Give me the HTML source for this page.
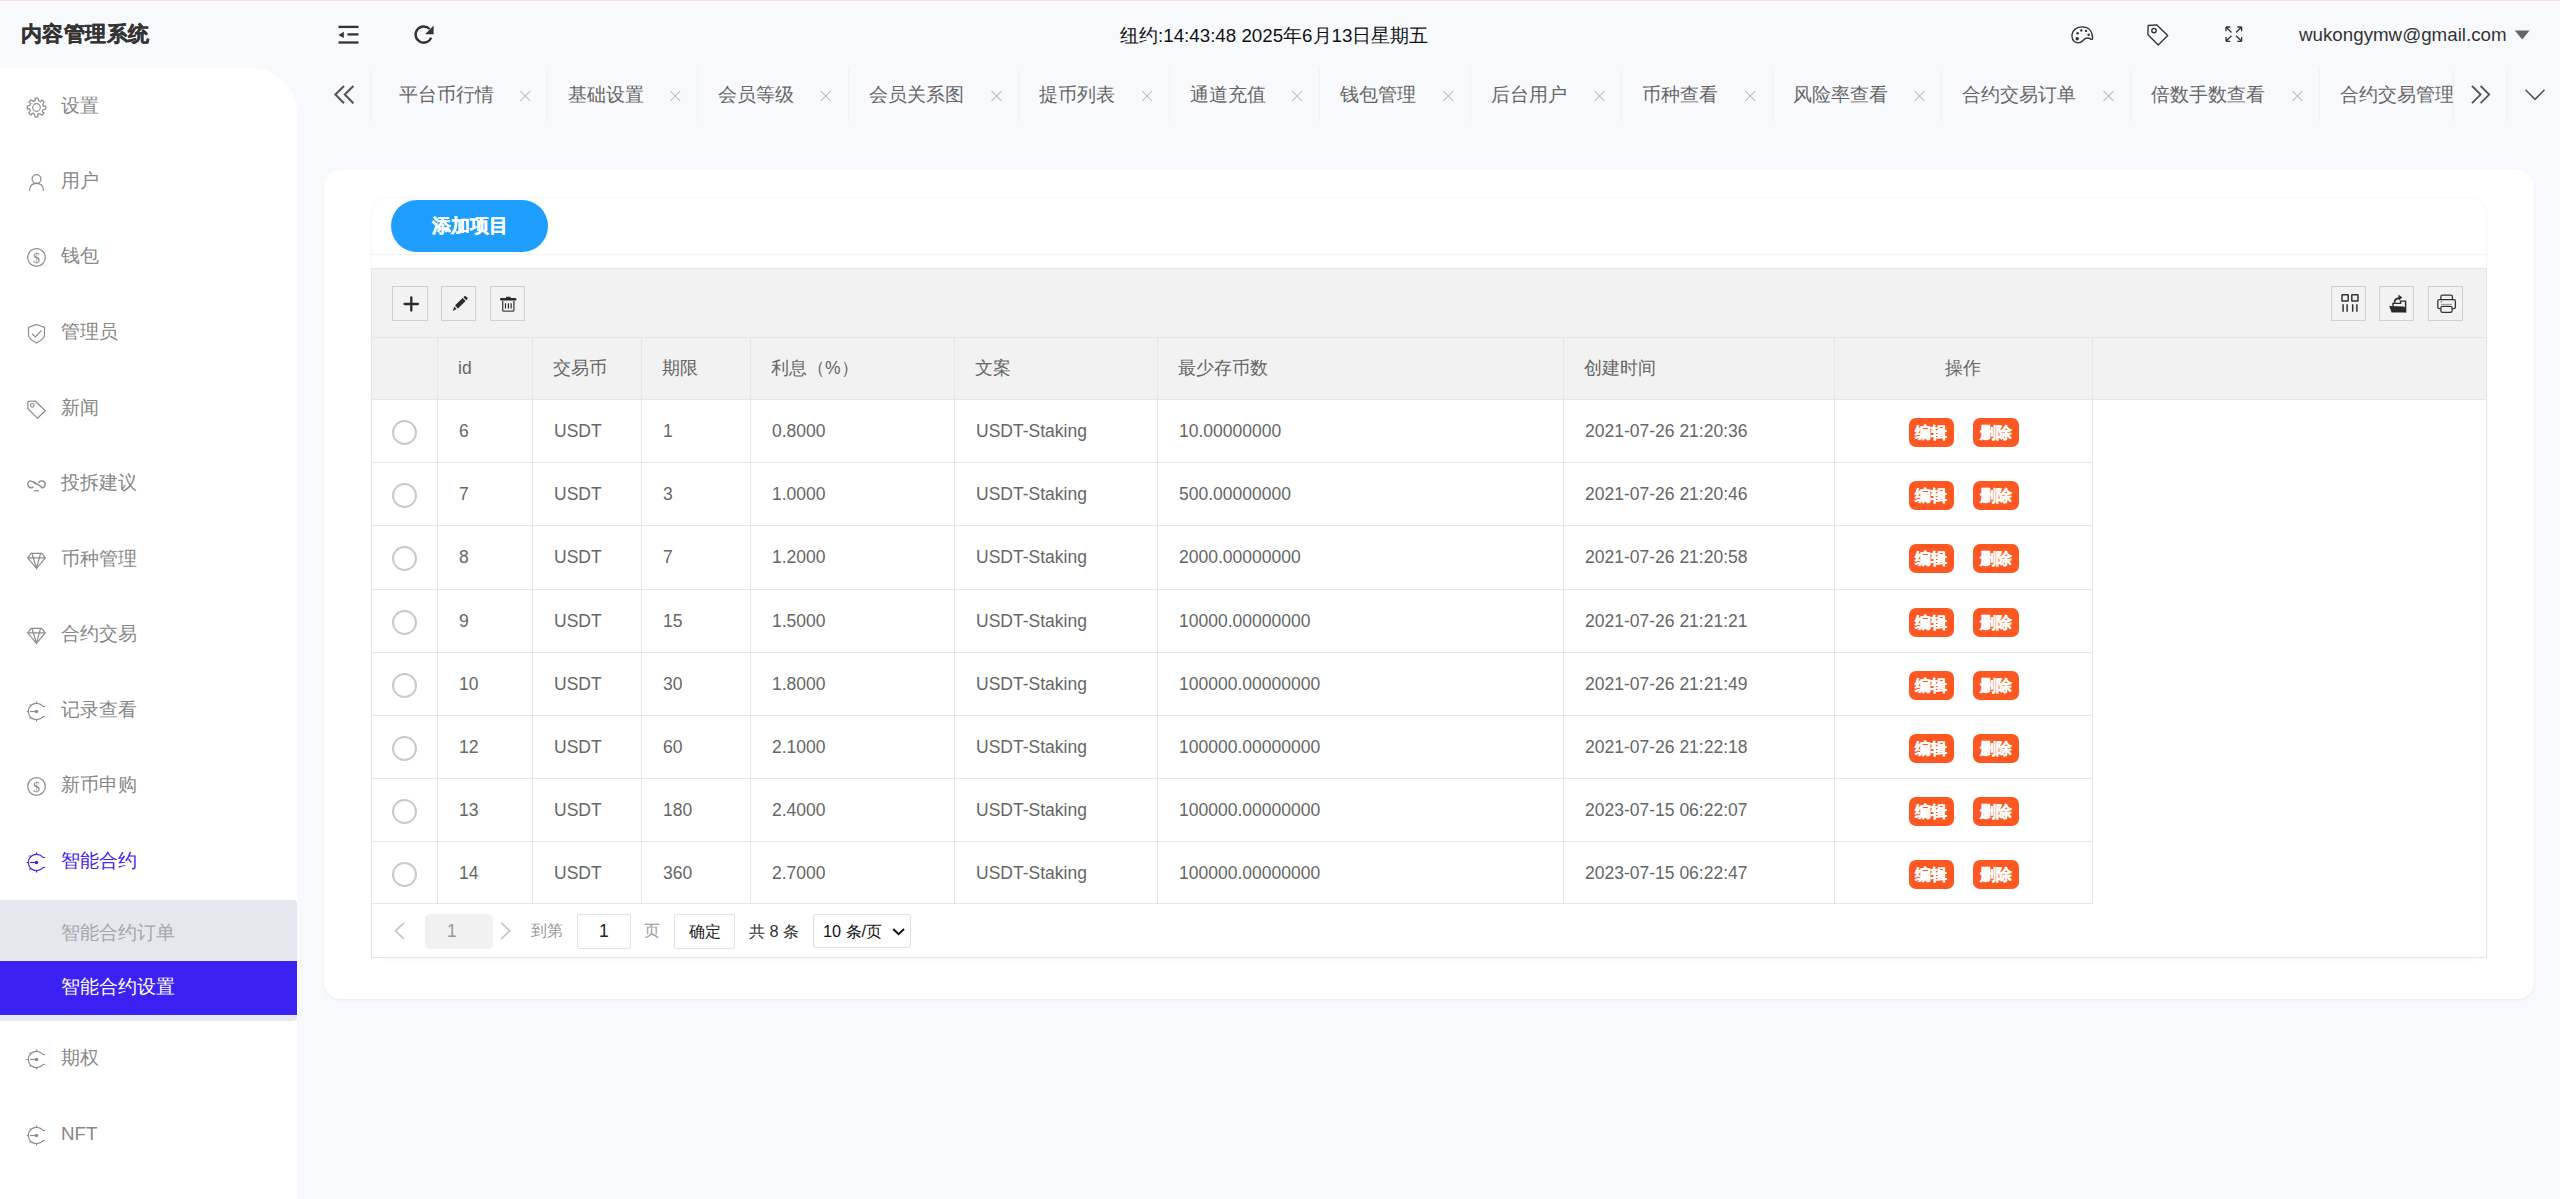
<!DOCTYPE html><html><head><meta charset="utf-8"><style>
*{box-sizing:border-box;margin:0;padding:0}
html,body{width:2560px;height:1199px;overflow:hidden}
body{background:#f8f9fc;font-family:"Liberation Sans",sans-serif;position:relative;color:#666}
.a{position:absolute}
svg{position:absolute;overflow:visible}
.t{position:absolute;white-space:nowrap;line-height:1}
</style></head><body>
<div class="a" style="left:0;top:0;width:2560px;height:1px;background:#f3dde3"></div>
<div class="t" style="left:21px;top:24px;font-size:21.3px;letter-spacing:0.4px;font-weight:bold;color:#333;-webkit-text-stroke:0.35px #333">内容管理系统</div>
<svg style="left:0;top:0" width="1" height="1"><g fill="#333" stroke="#333">
<line x1="338.5" y1="26.9" x2="358.5" y2="26.9" stroke-width="2.3"/>
<line x1="347.5" y1="34.4" x2="358.5" y2="34.4" stroke-width="2.3"/>
<line x1="338.5" y1="42.5" x2="358.5" y2="42.5" stroke-width="2.3"/>
<polygon points="338.4,34.9 343.8,31.8 343.8,38" stroke="none"/>
</g></svg>
<svg style="left:0;top:0" width="1" height="1"><g fill="none" stroke="#333" stroke-width="2.4">
<path d="M431.2 37.6 A8.1 8.1 0 1 1 429.6 29"/>
</g><polygon points="433.6,25.6 433.6,34.2 425.2,34.2" fill="#333"/></svg>
<div class="t" style="left:1120px;top:27px;font-size:18.75px;color:#111">纽约:14:43:48 2025年6月13日星期五</div>
<svg style="left:0;top:0" width="1" height="1"><g fill="none" stroke="#333" stroke-width="1.35">
<path d="M2082.3 26.9 C2088.5 26.9 2092.6 31 2092.6 38.2 C2092.6 39.6 2091.5 39.6 2090.4 38.9 C2088.5 37.8 2085.6 37.7 2083.3 40.2 C2080.7 43.2 2078.2 43.4 2075.5 42.2 C2072.4 40.6 2071.8 37.4 2072 34.6 C2072.5 30.2 2076.5 26.9 2082.3 26.9 Z"/>
</g><g fill="#333"><circle cx="2077.2" cy="38.7" r="1.75"/><circle cx="2077.6" cy="33.2" r="1.2"/><circle cx="2081.3" cy="30.4" r="1.2"/><circle cx="2086" cy="30.9" r="1.2"/><circle cx="2088.6" cy="34.7" r="1.25"/></g></svg>
<svg style="left:0;top:0" width="1" height="1"><g fill="none" stroke="#333" stroke-width="1.35">
<path d="M2148.2 25.5 L2156.6 24.8 L2167.7 35.6 L2158.2 45 L2147.8 34.6 Z" stroke-linejoin="round"/>
<circle cx="2154" cy="30.5" r="2.2"/></g></svg>
<svg style="left:0;top:0" width="1" height="1"><g fill="none" stroke="#333" stroke-width="1.3">
<path d="M2226 27 L2231.5 32.5 M2226 27 h4.3 M2226 27 v4.3"/>
<path d="M2241.6 27 L2236 32.5 M2241.6 27 h-4.3 M2241.6 27 v4.3"/>
<path d="M2226 41.3 L2231.5 35.8 M2226 41.3 h4.3 M2226 41.3 v-4.3"/>
<path d="M2241.6 41.3 L2236 35.8 M2241.6 41.3 h-4.3 M2241.6 41.3 v-4.3"/>
</g></svg>
<div class="t" style="left:2299px;top:26px;font-size:18.75px;color:#333">wukongymw@gmail.com</div>
<svg style="left:0;top:0" width="1" height="1"><polygon points="2514.8,30.4 2529.6,30.4 2522.2,39.4" fill="#666"/></svg>
<div class="a" style="left:0;top:68px;width:297px;height:1131px;background:#fff;border-top-right-radius:46px"></div>
<div class="t" style="left:61px;top:97px;font-size:18.75px;color:#878787">设置</div>
<svg style="left:0;top:0" width="1" height="1"><g fill="none" stroke="#8c8c8c" stroke-width="1.2"><polygon points="45.78,106.00 45.78,109.00 43.19,109.57 42.16,111.62 44.12,113.00 42.00,115.12 39.77,113.69 37.58,114.42 38.00,116.78 35.00,116.78 34.43,114.19 32.38,113.16 31.00,115.12 28.88,113.00 30.31,110.77 29.58,108.58 27.22,109.00 27.22,106.00 29.81,105.43 30.84,103.38 28.88,102.00 31.00,99.88 33.23,101.31 35.42,100.58 35.00,98.22 38.00,98.22 38.57,100.81 40.62,101.84 42.00,99.88 44.12,102.00 42.69,104.23 43.42,106.42" stroke-linejoin="round"/><circle cx="36.5" cy="107.5" r="3.8"/></g></svg>
<div class="t" style="left:61px;top:172px;font-size:18.75px;color:#878787">用户</div>
<svg style="left:0;top:0" width="1" height="1"><g fill="none" stroke="#8c8c8c" stroke-width="1.2"><circle cx="36.5" cy="179.0" r="4.4"/><path d="M29.5 191.0 C29.5 185.5 32.5 183.4 36.5 183.4 C40.5 183.4 43.5 185.5 43.5 191.0"/></g></svg>
<div class="t" style="left:61px;top:247px;font-size:18.75px;color:#878787">钱包</div>
<svg style="left:0;top:0" width="1" height="1"><g fill="none" stroke="#8c8c8c" stroke-width="1.2"><circle cx="36.5" cy="257.5" r="8.8"/></g><text x="36.5" y="262.7" font-size="14" text-anchor="middle" fill="#8c8c8c" font-family="Liberation Serif">$</text><g></g></svg>
<div class="t" style="left:61px;top:323px;font-size:18.75px;color:#878787">管理员</div>
<svg style="left:0;top:0" width="1" height="1"><g fill="none" stroke="#8c8c8c" stroke-width="1.2"><path d="M36.5 324.5 L44.5 327.5 L44.5 335.0 C44.5 338.5 40.5 341.0 36.5 343.0 C32.5 341.0 28.5 338.5 28.5 335.0 L28.5 327.5 Z"/><path d="M32.0 333.7 L35.5 337.0 L41.5 330.3"/></g></svg>
<div class="t" style="left:61px;top:399px;font-size:18.75px;color:#878787">新闻</div>
<svg style="left:0;top:0" width="1" height="1"><g fill="none" stroke="#8c8c8c" stroke-width="1.2"><path d="M28.0 401.3 L35.3 401.0 L45.2 410.7 L37.5 418.3 L27.7 408.5 Z" stroke-linejoin="round"/><circle cx="32.3" cy="405.3" r="1.8"/></g></svg>
<div class="t" style="left:61px;top:474px;font-size:18.75px;color:#878787">投拆建议</div>
<svg style="left:0;top:0" width="1" height="1"><g fill="none" stroke="#8c8c8c" stroke-width="1.2"><path d="M36.5 484.5 C33.5 482.0 31.5 480.9 30.2 480.9 A3.5 3.5 0 1 0 33.5 486.9" stroke-width="1.4"/><path d="M32.7 481.3 L40.1 485.9 C41.0 486.5 41.5 487.9 41.9 487.9 A3.5 3.5 0 1 0 38.5 482.9" stroke-width="1.4"/><line x1="34.0" y1="490.8" x2="39.0" y2="490.8" stroke-width="1.2"/></g></svg>
<div class="t" style="left:61px;top:550px;font-size:18.75px;color:#878787">币种管理</div>
<svg style="left:0;top:0" width="1" height="1"><g fill="none" stroke="#8c8c8c" stroke-width="1.2"><path d="M31.1 553.3 L41.7 553.3 L45.3 557.9 L36.5 568.3 L27.7 557.9 Z" stroke-linejoin="round"/><path d="M27.7 557.9 L45.3 557.9 M32.1 553.7 L36.5 568.1 L40.5 553.7"/></g></svg>
<div class="t" style="left:61px;top:625px;font-size:18.75px;color:#878787">合约交易</div>
<svg style="left:0;top:0" width="1" height="1"><g fill="none" stroke="#8c8c8c" stroke-width="1.2"><path d="M31.1 628.3 L41.7 628.3 L45.3 632.9 L36.5 643.3 L27.7 632.9 Z" stroke-linejoin="round"/><path d="M27.7 632.9 L45.3 632.9 M32.1 628.7 L36.5 643.1 L40.5 628.7"/></g></svg>
<div class="t" style="left:61px;top:701px;font-size:18.75px;color:#878787">记录查看</div>
<svg style="left:0;top:0" width="1" height="1"><g fill="none" stroke="#8c8c8c" stroke-width="1.2"><path d="M42.96 706.45 A8.2 8.2 0 1 0 42.96 716.55"/><path d="M36.50 703.30 L36.50 701.60 M30.70 705.70 L29.50 704.50 M28.30 711.50 L26.60 711.50 M30.70 717.30 L29.50 718.50 M36.50 719.70 L36.50 721.40 M42.96 706.45 l1.9 0.2 M42.96 716.55 l1.9 -0.2" stroke-width="1.1"/><line x1="30.1" y1="711.5" x2="36.5" y2="711.5"/></g><circle cx="36.5" cy="711.5" r="1.8" fill="#8c8c8c"/><g></g></svg>
<div class="t" style="left:61px;top:776px;font-size:18.75px;color:#878787">新币申购</div>
<svg style="left:0;top:0" width="1" height="1"><g fill="none" stroke="#8c8c8c" stroke-width="1.2"><circle cx="36.5" cy="786.5" r="8.8"/></g><text x="36.5" y="791.7" font-size="14" text-anchor="middle" fill="#8c8c8c" font-family="Liberation Serif">$</text><g></g></svg>
<div class="t" style="left:61px;top:852px;font-size:18.75px;color:#3c21f4">智能合约</div>
<svg style="left:0;top:0" width="1" height="1"><g fill="none" stroke="#3c21f4" stroke-width="1.2"><path d="M42.96 857.45 A8.2 8.2 0 1 0 42.96 867.55"/><path d="M36.50 854.30 L36.50 852.60 M30.70 856.70 L29.50 855.50 M28.30 862.50 L26.60 862.50 M30.70 868.30 L29.50 869.50 M36.50 870.70 L36.50 872.40 M42.96 857.45 l1.9 0.2 M42.96 867.55 l1.9 -0.2" stroke-width="1.1"/><line x1="30.1" y1="862.5" x2="36.5" y2="862.5"/></g><circle cx="36.5" cy="862.5" r="1.8" fill="#3c21f4"/><g></g></svg>
<div class="a" style="left:0;top:900px;width:297px;height:121px;background:#e4e7ee;border-radius:0 4px 4px 0"></div>
<div class="a" style="left:0;top:961px;width:297px;height:54px;background:#3c21f4"></div>
<div class="t" style="left:61px;top:924px;font-size:18.75px;color:#a6a6a6">智能合约订单</div>
<div class="t" style="left:61px;top:978px;font-size:18.75px;color:#fff">智能合约设置</div>
<div class="t" style="left:61px;top:1049px;font-size:18.75px;color:#878787">期权</div>
<svg style="left:0;top:0" width="1" height="1"><g fill="none" stroke="#8c8c8c" stroke-width="1.2"><path d="M42.96 1054.45 A8.2 8.2 0 1 0 42.96 1064.55"/><path d="M36.50 1051.30 L36.50 1049.60 M30.70 1053.70 L29.50 1052.50 M28.30 1059.50 L26.60 1059.50 M30.70 1065.30 L29.50 1066.50 M36.50 1067.70 L36.50 1069.40 M42.96 1054.45 l1.9 0.2 M42.96 1064.55 l1.9 -0.2" stroke-width="1.1"/><line x1="30.1" y1="1059.5" x2="36.5" y2="1059.5"/></g><circle cx="36.5" cy="1059.5" r="1.8" fill="#8c8c8c"/><g></g></svg>
<div class="t" style="left:61px;top:1125px;font-size:18.75px;color:#878787">NFT</div>
<svg style="left:0;top:0" width="1" height="1"><g fill="none" stroke="#8c8c8c" stroke-width="1.2"><path d="M42.96 1130.45 A8.2 8.2 0 1 0 42.96 1140.55"/><path d="M36.50 1127.30 L36.50 1125.60 M30.70 1129.70 L29.50 1128.50 M28.30 1135.50 L26.60 1135.50 M30.70 1141.30 L29.50 1142.50 M36.50 1143.70 L36.50 1145.40 M42.96 1130.45 l1.9 0.2 M42.96 1140.55 l1.9 -0.2" stroke-width="1.1"/><line x1="30.1" y1="1135.5" x2="36.5" y2="1135.5"/></g><circle cx="36.5" cy="1135.5" r="1.8" fill="#8c8c8c"/><g></g></svg>
<svg style="left:0;top:0" width="1" height="1"><g fill="none" stroke="#555" stroke-width="2.1"><path d="M344 86 L335.4 94.6 L344 103.2 M353.4 86 L344.8 94.6 L353.4 103.2"/></g></svg>
<div class="a" style="left:370px;top:68px;width:1px;height:54px;background:#f0f1f4"></div>
<div class="t" style="left:399.00px;top:86px;font-size:18.75px;color:#666">平台币行情</div>
<svg style="left:0;top:0" width="1" height="1"><path d="M520.25 91 L530.25 101 M530.25 91 L520.25 101" stroke="#b5b5b5" stroke-width="1.05"/></svg>
<div class="a" style="left:547px;top:68px;width:1px;height:54px;background:#f0f1f4"></div>
<div class="t" style="left:568.00px;top:86px;font-size:18.75px;color:#666">基础设置</div>
<svg style="left:0;top:0" width="1" height="1"><path d="M670.25 91 L680.25 101 M680.25 91 L670.25 101" stroke="#b5b5b5" stroke-width="1.05"/></svg>
<div class="a" style="left:697px;top:68px;width:1px;height:54px;background:#f0f1f4"></div>
<div class="t" style="left:718.00px;top:86px;font-size:18.75px;color:#666">会员等级</div>
<svg style="left:0;top:0" width="1" height="1"><path d="M820.75 91 L830.75 101 M830.75 91 L820.75 101" stroke="#b5b5b5" stroke-width="1.05"/></svg>
<div class="a" style="left:848px;top:68px;width:1px;height:54px;background:#f0f1f4"></div>
<div class="t" style="left:868.50px;top:86px;font-size:18.75px;color:#666">会员关系图</div>
<svg style="left:0;top:0" width="1" height="1"><path d="M991.5 91 L1001.5 101 M1001.5 91 L991.5 101" stroke="#b5b5b5" stroke-width="1.05"/></svg>
<div class="a" style="left:1018px;top:68px;width:1px;height:54px;background:#f0f1f4"></div>
<div class="t" style="left:1039.25px;top:86px;font-size:18.75px;color:#666">提币列表</div>
<svg style="left:0;top:0" width="1" height="1"><path d="M1142.0 91 L1152.0 101 M1152.0 91 L1142.0 101" stroke="#b5b5b5" stroke-width="1.05"/></svg>
<div class="a" style="left:1169px;top:68px;width:1px;height:54px;background:#f0f1f4"></div>
<div class="t" style="left:1189.75px;top:86px;font-size:18.75px;color:#666">通道充值</div>
<svg style="left:0;top:0" width="1" height="1"><path d="M1292.0 91 L1302.0 101 M1302.0 91 L1292.0 101" stroke="#b5b5b5" stroke-width="1.05"/></svg>
<div class="a" style="left:1319px;top:68px;width:1px;height:54px;background:#f0f1f4"></div>
<div class="t" style="left:1339.75px;top:86px;font-size:18.75px;color:#666">钱包管理</div>
<svg style="left:0;top:0" width="1" height="1"><path d="M1443.25 91 L1453.25 101 M1453.25 91 L1443.25 101" stroke="#b5b5b5" stroke-width="1.05"/></svg>
<div class="a" style="left:1470px;top:68px;width:1px;height:54px;background:#f0f1f4"></div>
<div class="t" style="left:1491.00px;top:86px;font-size:18.75px;color:#666">后台用户</div>
<svg style="left:0;top:0" width="1" height="1"><path d="M1594.5 91 L1604.5 101 M1604.5 91 L1594.5 101" stroke="#b5b5b5" stroke-width="1.05"/></svg>
<div class="a" style="left:1621px;top:68px;width:1px;height:54px;background:#f0f1f4"></div>
<div class="t" style="left:1642.25px;top:86px;font-size:18.75px;color:#666">币种查看</div>
<svg style="left:0;top:0" width="1" height="1"><path d="M1745.25 91 L1755.25 101 M1755.25 91 L1745.25 101" stroke="#b5b5b5" stroke-width="1.05"/></svg>
<div class="a" style="left:1772px;top:68px;width:1px;height:54px;background:#f0f1f4"></div>
<div class="t" style="left:1793.00px;top:86px;font-size:18.75px;color:#666">风险率查看</div>
<svg style="left:0;top:0" width="1" height="1"><path d="M1914.5 91 L1924.5 101 M1924.5 91 L1914.5 101" stroke="#b5b5b5" stroke-width="1.05"/></svg>
<div class="a" style="left:1941px;top:68px;width:1px;height:54px;background:#f0f1f4"></div>
<div class="t" style="left:1962.25px;top:86px;font-size:18.75px;color:#666">合约交易订单</div>
<svg style="left:0;top:0" width="1" height="1"><path d="M2103.5 91 L2113.5 101 M2113.5 91 L2103.5 101" stroke="#b5b5b5" stroke-width="1.05"/></svg>
<div class="a" style="left:2130px;top:68px;width:1px;height:54px;background:#f0f1f4"></div>
<div class="t" style="left:2151.25px;top:86px;font-size:18.75px;color:#666">倍数手数查看</div>
<svg style="left:0;top:0" width="1" height="1"><path d="M2292.45 91 L2302.45 101 M2302.45 91 L2292.45 101" stroke="#b5b5b5" stroke-width="1.05"/></svg>
<div class="a" style="left:2319px;top:68px;width:1px;height:54px;background:#f0f1f4"></div>
<div class="t" style="left:2340.20px;top:86px;font-size:18.75px;color:#666">合约交易管理</div>
<div class="a" style="left:2453px;top:68px;width:107px;height:54px;background:#f8f9fc"></div>
<div class="a" style="left:2453px;top:68px;width:1px;height:54px;background:#f0f1f4"></div>
<div class="a" style="left:2507px;top:68px;width:1px;height:54px;background:#f0f1f4"></div>
<svg style="left:0;top:0" width="1" height="1"><g fill="none" stroke="#555" stroke-width="1.8"><path d="M2472 86 L2480.6 94.6 L2472 103.2 M2480.6 86 L2489.2 94.6 L2480.6 103.2"/></g></svg>
<svg style="left:0;top:0" width="1" height="1"><path d="M2525.5 89.8 L2535 99.3 L2544.5 89.8" fill="none" stroke="#555" stroke-width="1.6"/></svg>
<div class="a" style="left:324px;top:170px;width:2210px;height:829px;background:#fff;border-radius:16px;box-shadow:0 1px 3px rgba(0,0,0,.05)"></div>
<div class="a" style="left:371px;top:197px;width:2116px;height:761px;border:1px solid #f8f8f8;border-radius:16px;box-shadow:0 2px 3px rgba(0,0,0,.035)"></div>
<div class="a" style="left:391px;top:200px;width:157px;height:52px;border-radius:26px;background:#1e9fff"></div>
<div class="t" style="left:432px;top:217px;font-size:18.5px;font-weight:bold;color:#fff;-webkit-text-stroke:0.3px #fff">添加项目</div>
<div class="a" style="left:371px;top:254px;width:2116px;height:1px;background:#f2f2f2"></div>
<div class="a" style="left:371px;top:268px;width:2116px;height:690px;border:1px solid #e6e6e6;background:#fff"></div>
<div class="a" style="left:372px;top:269px;width:2114px;height:130px;background:#f2f2f2"></div>
<div class="a" style="left:372px;top:337px;width:2114px;height:1px;background:#e6e6e6"></div>
<div class="a" style="left:392px;top:286px;width:36px;height:35px;border:1px solid #cfcfcf"></div>
<div class="a" style="left:441px;top:286px;width:35px;height:35px;border:1px solid #cfcfcf"></div>
<div class="a" style="left:490px;top:286px;width:35px;height:35px;border:1px solid #cfcfcf"></div>
<div class="a" style="left:2331px;top:286px;width:35px;height:35px;border:1px solid #cfcfcf"></div>
<div class="a" style="left:2379px;top:286px;width:35px;height:35px;border:1px solid #cfcfcf"></div>
<div class="a" style="left:2428px;top:286px;width:35px;height:35px;border:1px solid #cfcfcf"></div>
<svg style="left:0;top:0" width="1" height="1"><path d="M411.3 297.3 v13.3 M404.6 304 h13.3" stroke="#2a2a2a" stroke-width="2.3" stroke-linecap="round"/></svg>
<svg style="left:0;top:0" width="1" height="1"><g fill="#2a2a2a"><path d="M452.8 310.9 L454.2 306.6 L456.6 309 Z"/><path d="M455 305.6 L462.6 298 L465.6 301 L458 308.6 Z"/><path d="M463.4 297.2 L464.3 296.3 Q465.2 295.6 466.1 296.4 L467.2 297.5 Q468 298.4 467.2 299.3 L466.4 300.2 Z"/></g></svg>
<svg style="left:0;top:0" width="1" height="1"><g fill="none" stroke="#444" stroke-width="1.3"><path d="M502.7 300.8 v9.4 q0 1 1 1 h9.2 q1 0 1 -1 v-9.4"/></g><g fill="none" stroke="#2a2a2a"><path d="M501.2 299.3 h14" stroke-width="2.4" stroke-linecap="round"/><path d="M506 297.6 h4.6" stroke-width="1.6"/><path d="M505.5 303.2 v5.4 M508.4 303.2 v5.4 M511.1 303.2 v5.4" stroke-width="1.2"/></g></svg>
<svg style="left:0;top:0" width="1" height="1"><g fill="none" stroke="#333" stroke-width="1.5"><rect x="2342" y="294.7" width="6.2" height="6.4" rx="0.4"/><rect x="2351.8" y="294.7" width="6.2" height="6.4" rx="0.4"/><path d="M2343.1 304.3 v7.4 M2347.1 304.3 v7.4 M2352.7 304.3 v7.4 M2356.9 304.3 v7.4"/></g></svg>
<svg style="left:0;top:0" width="1" height="1"><g fill="#2a2a2a"><path d="M2389.2 306.1 L2403.8 306.4 L2405.9 308.6 L2405.9 312.4 L2391.6 312.4 Z"/></g><g fill="none" stroke="#2a2a2a" stroke-width="1.4"><path d="M2393 306 v-2.6 h7.6 v-2.3 h5 v11.3"/><path d="M2394.6 302.6 q-0.2 -4.2 4.8 -4.4" stroke-width="1.9"/></g><path d="M2398.3 294.5 L2402.3 297.6 L2398.9 300.4 Z" fill="#2a2a2a"/></svg>
<svg style="left:0;top:0" width="1" height="1"><g fill="none" stroke="#333" stroke-width="1.3"><path d="M2440.9 299.5 v-2.8 q0 -1.6 1.6 -1.6 h8.3 q1.6 0 1.6 1.6 v2.8"/><path d="M2440.6 308.6 h-1.2 q-1.6 0 -1.6 -1.6 v-5.8 q0 -1.6 1.6 -1.6 h14.4 q1.6 0 1.6 1.6 v5.8 q0 1.6 -1.6 1.6 h-1.2"/><rect x="2440.9" y="306.3" width="11.2" height="6.1" rx="1.6"/></g><path d="M2440.5 301.8 h1.8" stroke="#555" stroke-width="0.8"/><path d="M2441 304.4 h11" stroke="#999" stroke-width="1"/></svg>
<div class="t" style="left:458px;top:360px;font-size:17.5px;color:#666">id</div>
<div class="t" style="left:553px;top:360px;font-size:17.5px;color:#666">交易币</div>
<div class="t" style="left:662px;top:360px;font-size:17.5px;color:#666">期限</div>
<div class="t" style="left:771px;top:360px;font-size:17.5px;color:#666">利息（%）</div>
<div class="t" style="left:975px;top:360px;font-size:17.5px;color:#666">文案</div>
<div class="t" style="left:1178px;top:360px;font-size:17.5px;color:#666">最少存币数</div>
<div class="t" style="left:1584px;top:360px;font-size:17.5px;color:#666">创建时间</div>
<div class="t" style="left:1834px;width:258px;text-align:center;top:360px;font-size:17.5px;color:#666">操作</div>
<div class="a" style="left:372px;top:399px;width:2114px;height:1px;background:#e6e6e6"></div>
<div class="a" style="left:372px;top:462px;width:1721px;height:1px;background:#e6e6e6"></div>
<div class="a" style="left:372px;top:525px;width:1721px;height:1px;background:#e6e6e6"></div>
<div class="a" style="left:372px;top:589px;width:1721px;height:1px;background:#e6e6e6"></div>
<div class="a" style="left:372px;top:652px;width:1721px;height:1px;background:#e6e6e6"></div>
<div class="a" style="left:372px;top:715px;width:1721px;height:1px;background:#e6e6e6"></div>
<div class="a" style="left:372px;top:778px;width:1721px;height:1px;background:#e6e6e6"></div>
<div class="a" style="left:372px;top:841px;width:1721px;height:1px;background:#e6e6e6"></div>
<div class="a" style="left:372px;top:903px;width:1721px;height:1px;background:#e6e6e6"></div>
<div class="a" style="left:437px;top:338px;width:1px;height:565px;background:#e6e6e6"></div>
<div class="a" style="left:532px;top:338px;width:1px;height:565px;background:#e6e6e6"></div>
<div class="a" style="left:641px;top:338px;width:1px;height:565px;background:#e6e6e6"></div>
<div class="a" style="left:750px;top:338px;width:1px;height:565px;background:#e6e6e6"></div>
<div class="a" style="left:954px;top:338px;width:1px;height:565px;background:#e6e6e6"></div>
<div class="a" style="left:1157px;top:338px;width:1px;height:565px;background:#e6e6e6"></div>
<div class="a" style="left:1563px;top:338px;width:1px;height:565px;background:#e6e6e6"></div>
<div class="a" style="left:1834px;top:338px;width:1px;height:565px;background:#e6e6e6"></div>
<div class="a" style="left:2092px;top:338px;width:1px;height:565px;background:#e6e6e6"></div>
<div class="a" style="left:392px;top:420px;width:25px;height:25px;border:2px solid #c9c9c9;border-radius:50%"></div>
<div class="t" style="left:459px;top:423px;font-size:17.5px;color:#666">6</div>
<div class="t" style="left:554px;top:423px;font-size:17.5px;color:#666">USDT</div>
<div class="t" style="left:663px;top:423px;font-size:17.5px;color:#666">1</div>
<div class="t" style="left:772px;top:423px;font-size:17.5px;color:#666">0.8000</div>
<div class="t" style="left:976px;top:423px;font-size:17.5px;color:#666">USDT-Staking</div>
<div class="t" style="left:1179px;top:423px;font-size:17.5px;color:#666">10.00000000</div>
<div class="t" style="left:1585px;top:423px;font-size:17.5px;color:#666">2021-07-26 21:20:36</div>
<div class="a" style="left:1909px;top:418px;width:45px;height:29px;border-radius:7px;background:#ff5722"></div>
<div class="a" style="left:1973px;top:418px;width:46px;height:29px;border-radius:7px;background:#ff5722"></div>
<div class="t" style="left:1915px;top:425px;font-size:16px;font-weight:bold;color:#fff;-webkit-text-stroke:0.3px #fff">编辑</div>
<div class="t" style="left:1980px;top:425px;font-size:16px;font-weight:bold;color:#fff;-webkit-text-stroke:0.3px #fff">删除</div>
<div class="a" style="left:392px;top:483px;width:25px;height:25px;border:2px solid #c9c9c9;border-radius:50%"></div>
<div class="t" style="left:459px;top:486px;font-size:17.5px;color:#666">7</div>
<div class="t" style="left:554px;top:486px;font-size:17.5px;color:#666">USDT</div>
<div class="t" style="left:663px;top:486px;font-size:17.5px;color:#666">3</div>
<div class="t" style="left:772px;top:486px;font-size:17.5px;color:#666">1.0000</div>
<div class="t" style="left:976px;top:486px;font-size:17.5px;color:#666">USDT-Staking</div>
<div class="t" style="left:1179px;top:486px;font-size:17.5px;color:#666">500.00000000</div>
<div class="t" style="left:1585px;top:486px;font-size:17.5px;color:#666">2021-07-26 21:20:46</div>
<div class="a" style="left:1909px;top:481px;width:45px;height:29px;border-radius:7px;background:#ff5722"></div>
<div class="a" style="left:1973px;top:481px;width:46px;height:29px;border-radius:7px;background:#ff5722"></div>
<div class="t" style="left:1915px;top:488px;font-size:16px;font-weight:bold;color:#fff;-webkit-text-stroke:0.3px #fff">编辑</div>
<div class="t" style="left:1980px;top:488px;font-size:16px;font-weight:bold;color:#fff;-webkit-text-stroke:0.3px #fff">删除</div>
<div class="a" style="left:392px;top:546px;width:25px;height:25px;border:2px solid #c9c9c9;border-radius:50%"></div>
<div class="t" style="left:459px;top:549px;font-size:17.5px;color:#666">8</div>
<div class="t" style="left:554px;top:549px;font-size:17.5px;color:#666">USDT</div>
<div class="t" style="left:663px;top:549px;font-size:17.5px;color:#666">7</div>
<div class="t" style="left:772px;top:549px;font-size:17.5px;color:#666">1.2000</div>
<div class="t" style="left:976px;top:549px;font-size:17.5px;color:#666">USDT-Staking</div>
<div class="t" style="left:1179px;top:549px;font-size:17.5px;color:#666">2000.00000000</div>
<div class="t" style="left:1585px;top:549px;font-size:17.5px;color:#666">2021-07-26 21:20:58</div>
<div class="a" style="left:1909px;top:544px;width:45px;height:29px;border-radius:7px;background:#ff5722"></div>
<div class="a" style="left:1973px;top:544px;width:46px;height:29px;border-radius:7px;background:#ff5722"></div>
<div class="t" style="left:1915px;top:551px;font-size:16px;font-weight:bold;color:#fff;-webkit-text-stroke:0.3px #fff">编辑</div>
<div class="t" style="left:1980px;top:551px;font-size:16px;font-weight:bold;color:#fff;-webkit-text-stroke:0.3px #fff">删除</div>
<div class="a" style="left:392px;top:610px;width:25px;height:25px;border:2px solid #c9c9c9;border-radius:50%"></div>
<div class="t" style="left:459px;top:613px;font-size:17.5px;color:#666">9</div>
<div class="t" style="left:554px;top:613px;font-size:17.5px;color:#666">USDT</div>
<div class="t" style="left:663px;top:613px;font-size:17.5px;color:#666">15</div>
<div class="t" style="left:772px;top:613px;font-size:17.5px;color:#666">1.5000</div>
<div class="t" style="left:976px;top:613px;font-size:17.5px;color:#666">USDT-Staking</div>
<div class="t" style="left:1179px;top:613px;font-size:17.5px;color:#666">10000.00000000</div>
<div class="t" style="left:1585px;top:613px;font-size:17.5px;color:#666">2021-07-26 21:21:21</div>
<div class="a" style="left:1909px;top:608px;width:45px;height:29px;border-radius:7px;background:#ff5722"></div>
<div class="a" style="left:1973px;top:608px;width:46px;height:29px;border-radius:7px;background:#ff5722"></div>
<div class="t" style="left:1915px;top:615px;font-size:16px;font-weight:bold;color:#fff;-webkit-text-stroke:0.3px #fff">编辑</div>
<div class="t" style="left:1980px;top:615px;font-size:16px;font-weight:bold;color:#fff;-webkit-text-stroke:0.3px #fff">删除</div>
<div class="a" style="left:392px;top:673px;width:25px;height:25px;border:2px solid #c9c9c9;border-radius:50%"></div>
<div class="t" style="left:459px;top:676px;font-size:17.5px;color:#666">10</div>
<div class="t" style="left:554px;top:676px;font-size:17.5px;color:#666">USDT</div>
<div class="t" style="left:663px;top:676px;font-size:17.5px;color:#666">30</div>
<div class="t" style="left:772px;top:676px;font-size:17.5px;color:#666">1.8000</div>
<div class="t" style="left:976px;top:676px;font-size:17.5px;color:#666">USDT-Staking</div>
<div class="t" style="left:1179px;top:676px;font-size:17.5px;color:#666">100000.00000000</div>
<div class="t" style="left:1585px;top:676px;font-size:17.5px;color:#666">2021-07-26 21:21:49</div>
<div class="a" style="left:1909px;top:671px;width:45px;height:29px;border-radius:7px;background:#ff5722"></div>
<div class="a" style="left:1973px;top:671px;width:46px;height:29px;border-radius:7px;background:#ff5722"></div>
<div class="t" style="left:1915px;top:678px;font-size:16px;font-weight:bold;color:#fff;-webkit-text-stroke:0.3px #fff">编辑</div>
<div class="t" style="left:1980px;top:678px;font-size:16px;font-weight:bold;color:#fff;-webkit-text-stroke:0.3px #fff">删除</div>
<div class="a" style="left:392px;top:736px;width:25px;height:25px;border:2px solid #c9c9c9;border-radius:50%"></div>
<div class="t" style="left:459px;top:739px;font-size:17.5px;color:#666">12</div>
<div class="t" style="left:554px;top:739px;font-size:17.5px;color:#666">USDT</div>
<div class="t" style="left:663px;top:739px;font-size:17.5px;color:#666">60</div>
<div class="t" style="left:772px;top:739px;font-size:17.5px;color:#666">2.1000</div>
<div class="t" style="left:976px;top:739px;font-size:17.5px;color:#666">USDT-Staking</div>
<div class="t" style="left:1179px;top:739px;font-size:17.5px;color:#666">100000.00000000</div>
<div class="t" style="left:1585px;top:739px;font-size:17.5px;color:#666">2021-07-26 21:22:18</div>
<div class="a" style="left:1909px;top:734px;width:45px;height:29px;border-radius:7px;background:#ff5722"></div>
<div class="a" style="left:1973px;top:734px;width:46px;height:29px;border-radius:7px;background:#ff5722"></div>
<div class="t" style="left:1915px;top:741px;font-size:16px;font-weight:bold;color:#fff;-webkit-text-stroke:0.3px #fff">编辑</div>
<div class="t" style="left:1980px;top:741px;font-size:16px;font-weight:bold;color:#fff;-webkit-text-stroke:0.3px #fff">删除</div>
<div class="a" style="left:392px;top:799px;width:25px;height:25px;border:2px solid #c9c9c9;border-radius:50%"></div>
<div class="t" style="left:459px;top:802px;font-size:17.5px;color:#666">13</div>
<div class="t" style="left:554px;top:802px;font-size:17.5px;color:#666">USDT</div>
<div class="t" style="left:663px;top:802px;font-size:17.5px;color:#666">180</div>
<div class="t" style="left:772px;top:802px;font-size:17.5px;color:#666">2.4000</div>
<div class="t" style="left:976px;top:802px;font-size:17.5px;color:#666">USDT-Staking</div>
<div class="t" style="left:1179px;top:802px;font-size:17.5px;color:#666">100000.00000000</div>
<div class="t" style="left:1585px;top:802px;font-size:17.5px;color:#666">2023-07-15 06:22:07</div>
<div class="a" style="left:1909px;top:797px;width:45px;height:29px;border-radius:7px;background:#ff5722"></div>
<div class="a" style="left:1973px;top:797px;width:46px;height:29px;border-radius:7px;background:#ff5722"></div>
<div class="t" style="left:1915px;top:804px;font-size:16px;font-weight:bold;color:#fff;-webkit-text-stroke:0.3px #fff">编辑</div>
<div class="t" style="left:1980px;top:804px;font-size:16px;font-weight:bold;color:#fff;-webkit-text-stroke:0.3px #fff">删除</div>
<div class="a" style="left:392px;top:862px;width:25px;height:25px;border:2px solid #c9c9c9;border-radius:50%"></div>
<div class="t" style="left:459px;top:865px;font-size:17.5px;color:#666">14</div>
<div class="t" style="left:554px;top:865px;font-size:17.5px;color:#666">USDT</div>
<div class="t" style="left:663px;top:865px;font-size:17.5px;color:#666">360</div>
<div class="t" style="left:772px;top:865px;font-size:17.5px;color:#666">2.7000</div>
<div class="t" style="left:976px;top:865px;font-size:17.5px;color:#666">USDT-Staking</div>
<div class="t" style="left:1179px;top:865px;font-size:17.5px;color:#666">100000.00000000</div>
<div class="t" style="left:1585px;top:865px;font-size:17.5px;color:#666">2023-07-15 06:22:47</div>
<div class="a" style="left:1909px;top:860px;width:45px;height:29px;border-radius:7px;background:#ff5722"></div>
<div class="a" style="left:1973px;top:860px;width:46px;height:29px;border-radius:7px;background:#ff5722"></div>
<div class="t" style="left:1915px;top:867px;font-size:16px;font-weight:bold;color:#fff;-webkit-text-stroke:0.3px #fff">编辑</div>
<div class="t" style="left:1980px;top:867px;font-size:16px;font-weight:bold;color:#fff;-webkit-text-stroke:0.3px #fff">删除</div>
<svg style="left:0;top:0" width="1" height="1"><path d="M404 922.8 L395.4 930.8 L404 938.8 M501.2 922.8 L509.8 930.8 L501.2 938.8" fill="none" stroke="#c6c6c6" stroke-width="1.7"/></svg>
<div class="a" style="left:425px;top:914px;width:68px;height:35px;border-radius:5px;background:#f1f1f1"></div>
<div class="t" style="left:447px;top:923px;font-size:17.5px;color:#999">1</div>
<div class="t" style="left:531px;top:922px;font-size:16.25px;color:#999">到第</div>
<div class="a" style="left:577px;top:914px;width:54px;height:35px;border:1px solid #e2e2e2;border-radius:2px;background:#fff"></div>
<div class="t" style="left:599px;top:923px;font-size:17.5px;color:#222">1</div>
<div class="t" style="left:644px;top:922px;font-size:16.25px;color:#999">页</div>
<div class="a" style="left:674px;top:914px;width:61px;height:35px;border:1px solid #e2e2e2;border-radius:2px;background:#fff"></div>
<div class="t" style="left:689px;top:924px;font-size:16px;color:#222">确定</div>
<div class="t" style="left:749px;top:923px;font-size:16.25px;color:#333">共 8 条</div>
<div class="a" style="left:813px;top:914px;width:98px;height:34px;border:1px solid #e0e0e0;border-radius:3px;background:#fff"></div>
<div class="t" style="left:823px;top:923px;font-size:16.25px;color:#111">10 条/页</div>
<svg style="left:0;top:0" width="1" height="1"><path d="M893.2 929 L898.6 934.2 L904 929" fill="none" stroke="#111" stroke-width="2"/></svg>
</body></html>
